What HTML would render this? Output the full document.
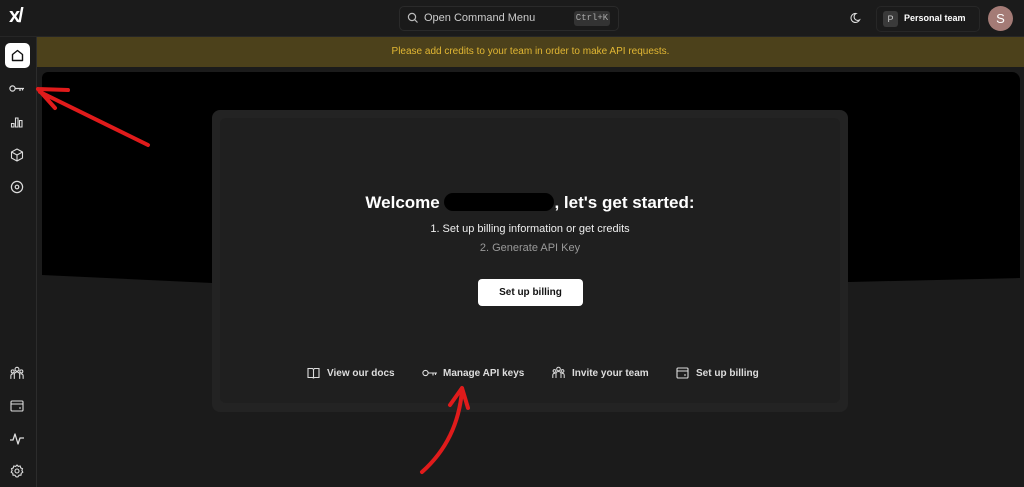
<!DOCTYPE html>
<html><head><meta charset="utf-8"><style>
*{margin:0;padding:0;box-sizing:border-box}
body{width:1024px;height:487px;background:#1b1b1b;font-family:"Liberation Sans",sans-serif;position:relative;overflow:hidden;color:#e8e8e8}
.abs{position:absolute}
svg{position:absolute}
</style></head><body>
<!-- sidebar border -->
<div class="abs" style="left:36px;top:36px;width:1px;height:451px;background:#2c2c2c"></div>
<div class="abs" style="left:0;top:36px;width:1024px;height:1px;background:#262626"></div>
<!-- logo -->
<div class="abs" style="left:9px;top:5px;font-size:20px;font-weight:bold;color:#fff;letter-spacing:-2px">x/</div>
<!-- search -->
<div class="abs" style="left:399px;top:6px;width:220px;height:25px;border:1px solid #2a2a2a;border-radius:5px;background:#1a1a1a"></div>
<svg style="left:407px;top:12px" width="12" height="12" viewBox="0 0 12 12"><circle cx="5" cy="5" r="3.6" fill="none" stroke="#bbb" stroke-width="1.2"/><path d="M7.6 7.6L10.5 10.5" stroke="#bbb" stroke-width="1.2"/></svg>
<div class="abs" style="left:424px;top:12px;font-size:11px;color:#ccc">Open Command Menu</div>
<div class="abs" style="left:574px;top:11px;width:36px;height:15px;background:#333;border-radius:3px;font-size:9px;color:#aaa;text-align:center;line-height:15px;font-family:'Liberation Mono',monospace">Ctrl+K</div>
<!-- moon -->
<svg style="left:849px;top:12px" width="12" height="12" viewBox="0 0 12 12"><path d="M7 1.5A4.5 4.5 0 1 0 10.5 8 3.6 3.6 0 0 1 7 1.5z" fill="none" stroke="#ddd" stroke-width="1.1"/></svg>
<div class="abs" style="left:876px;top:6px;width:104px;height:26px;border:1px solid #272727;border-radius:5px"></div>
<div class="abs" style="left:883px;top:11px;width:15px;height:16px;background:#3a3a3a;border-radius:3px;font-size:9px;color:#ccc;text-align:center;line-height:16px">P</div>
<div class="abs" style="left:904px;top:13px;font-size:9px;color:#fff;font-weight:bold">Personal team</div>
<div class="abs" style="left:988px;top:6px;width:25px;height:25px;border-radius:50%;background:#a47b76;color:#fff;font-size:13px;text-align:center;line-height:25px">S</div>
<!-- banner -->
<div class="abs" style="left:37px;top:37px;width:987px;height:30px;background:#4c411b;color:#e2b733;font-size:10px;text-align:center;line-height:30px">Please add credits to your team in order to make API requests.</div>
<!-- black area -->
<svg style="left:42px;top:72px" width="982" height="215" viewBox="0 0 982 215"><path d="M6 0H970a8 8 0 0 1 8 8V206L808 210L170 211L0 203V6a6 6 0 0 1 6-6z" fill="#000"/></svg>
<!-- card -->
<div class="abs" style="left:212px;top:110px;width:636px;height:302px;background:#232323;border-radius:8px"></div>
<div class="abs" style="left:220px;top:118px;width:620px;height:285px;background:#1f1f1f;border-radius:6px"></div>
<div class="abs" style="left:220px;top:193px;width:620px;text-align:center;font-size:17px;font-weight:bold;color:#fff">Welcome <span style="display:inline-block;width:110px;height:18px;background:#000;border-radius:9px;vertical-align:-3px"></span>, let's get started:</div>
<div class="abs" style="left:220px;top:223px;width:620px;text-align:center;font-size:11px;color:#eee">1. Set up billing information or get credits</div>
<div class="abs" style="left:220px;top:242px;width:620px;text-align:center;font-size:11px;color:#999">2. Generate API Key</div>
<div class="abs" style="left:478px;top:279px;width:105px;height:27px;background:#fff;border-radius:4px;color:#111;font-size:10px;font-weight:bold;text-align:center;line-height:27px">Set up billing</div>
<!-- links -->
<div class="abs" style="left:327px;top:368px;font-size:10px;color:#ddd;font-weight:bold">View our docs</div>
<svg style="left:307px;top:367px" width="13" height="12" viewBox="0 0 13 12"><path d="M1 1.5H5.5L6.5 2.5L7.5 1.5H12V10.5H7.5L6.5 11L5.5 10.5H1Z M6.5 2.5V11" fill="none" stroke="#ddd" stroke-width="1.1"/></svg>
<div class="abs" style="left:443px;top:368px;font-size:10px;color:#ddd;font-weight:bold">Manage API keys</div>
<svg style="left:422px;top:369px" width="16" height="8" viewBox="0 0 16 8"><circle cx="3.5" cy="4" r="2.6" fill="none" stroke="#ddd" stroke-width="1.1"/><path d="M6 4H15M11 4V6.5M13.5 4V6" stroke="#ddd" stroke-width="1.1" fill="none"/></svg>
<div class="abs" style="left:572px;top:368px;font-size:10px;color:#ddd;font-weight:bold">Invite your team</div>
<svg style="left:552px;top:366px" width="13" height="13" viewBox="0 0 13 13"><circle cx="6.5" cy="3" r="1.8" fill="none" stroke="#ddd"/><circle cx="2.5" cy="5" r="1.4" fill="none" stroke="#ddd"/><circle cx="10.5" cy="5" r="1.4" fill="none" stroke="#ddd"/><path d="M4 12V8a2.5 2.5 0 0 1 5 0V12M0.8 12V9a1.7 1.7 0 0 1 2.5-1.5M12.2 12V9a1.7 1.7 0 0 0-2.5-1.5" fill="none" stroke="#ddd"/></svg>
<div class="abs" style="left:696px;top:368px;font-size:10px;color:#ddd;font-weight:bold">Set up billing</div>
<svg style="left:676px;top:367px" width="13" height="12" viewBox="0 0 13 12"><rect x="1" y="1" width="11" height="10" rx="1" fill="none" stroke="#ddd" stroke-width="1.1"/><path d="M1 4H12M8 8H10" stroke="#ddd" stroke-width="1.1"/></svg>
<!-- sidebar icons -->
<div class="abs" style="left:5px;top:43px;width:25px;height:25px;background:#fff;border-radius:5px"></div>
<svg style="left:10px;top:48px" width="15" height="15" viewBox="0 0 15 15"><path d="M2.5 12.5V6.5L7.5 2.5L12.5 6.5V12.5Z" fill="none" stroke="#111" stroke-width="1.4" stroke-linejoin="round"/></svg>
<svg style="left:9px;top:84px" width="16" height="9" viewBox="0 0 16 9"><circle cx="3.5" cy="4.5" r="2.6" fill="none" stroke="#ddd" stroke-width="1.2"/><path d="M6 4.5H15M11 4.5V7M13.5 4.5V6.5" stroke="#ddd" stroke-width="1.2" fill="none"/></svg>
<svg style="left:10px;top:115px" width="14" height="13" viewBox="0 0 14 13"><path d="M1.5 12V8.5H4V12ZM5.5 12V3H8V12ZM9.5 12V5.5H12V12Z" fill="none" stroke="#ddd" stroke-width="1.1"/></svg>
<svg style="left:10px;top:148px" width="14" height="14" viewBox="0 0 14 14"><path d="M7 1L12.5 4V10L7 13L1.5 10V4Z M1.5 4L7 7L12.5 4 M7 7V13" fill="none" stroke="#ddd" stroke-width="1.1" stroke-linejoin="round"/></svg>
<svg style="left:10px;top:180px" width="14" height="14" viewBox="0 0 14 14"><circle cx="7" cy="7" r="5.6" fill="none" stroke="#ddd" stroke-width="1.2"/><circle cx="7" cy="7" r="1.8" fill="none" stroke="#ddd" stroke-width="1.2"/></svg>
<svg style="left:10px;top:366px" width="14" height="14" viewBox="0 0 13 13"><circle cx="6.5" cy="3" r="1.8" fill="none" stroke="#ddd"/><circle cx="2.5" cy="5" r="1.4" fill="none" stroke="#ddd"/><circle cx="10.5" cy="5" r="1.4" fill="none" stroke="#ddd"/><path d="M4 12V8a2.5 2.5 0 0 1 5 0V12M0.8 12V9a1.7 1.7 0 0 1 2.5-1.5M12.2 12V9a1.7 1.7 0 0 0-2.5-1.5" fill="none" stroke="#ddd"/></svg>
<svg style="left:10px;top:400px" width="14" height="12" viewBox="0 0 14 12"><rect x="1" y="1" width="12" height="10" rx="1" fill="none" stroke="#ddd" stroke-width="1.1"/><path d="M1 4H13M9 8H11" stroke="#ddd" stroke-width="1.1"/></svg>
<svg style="left:9px;top:432px" width="16" height="14" viewBox="0 0 16 14"><path d="M1 8H4L6 2L9 12L11 6H15" fill="none" stroke="#ddd" stroke-width="1.3" stroke-linejoin="round"/></svg>
<svg style="left:10px;top:464px" width="14" height="14" viewBox="0 0 14 14"><path d="M7 1L8.3 2.4L10.2 2L10.7 3.9L12.5 4.7L11.9 6.5L12.8 8.2L11.2 9.3L11 11.2L9.1 11.2L7.9 12.8L7 12.9L6.1 12.8L4.9 11.2L3 11.2L2.8 9.3L1.2 8.2L2.1 6.5L1.5 4.7L3.3 3.9L3.8 2L5.7 2.4Z" fill="none" stroke="#ddd" stroke-width="1.1"/><circle cx="7" cy="7" r="2" fill="none" stroke="#ddd" stroke-width="1.1"/></svg>
<!-- red arrows -->
<svg style="left:0;top:0" width="1024" height="487" viewBox="0 0 1024 487"><path d="M148 145L40 92M38 89L68 90M38 89L55 108" fill="none" stroke="#e01b1b" stroke-width="4" stroke-linecap="round"/><path d="M422 472Q458 440 462 390M462 388L450 405M462 388L468 408" fill="none" stroke="#e01b1b" stroke-width="4" stroke-linecap="round"/></svg>
</body></html>
